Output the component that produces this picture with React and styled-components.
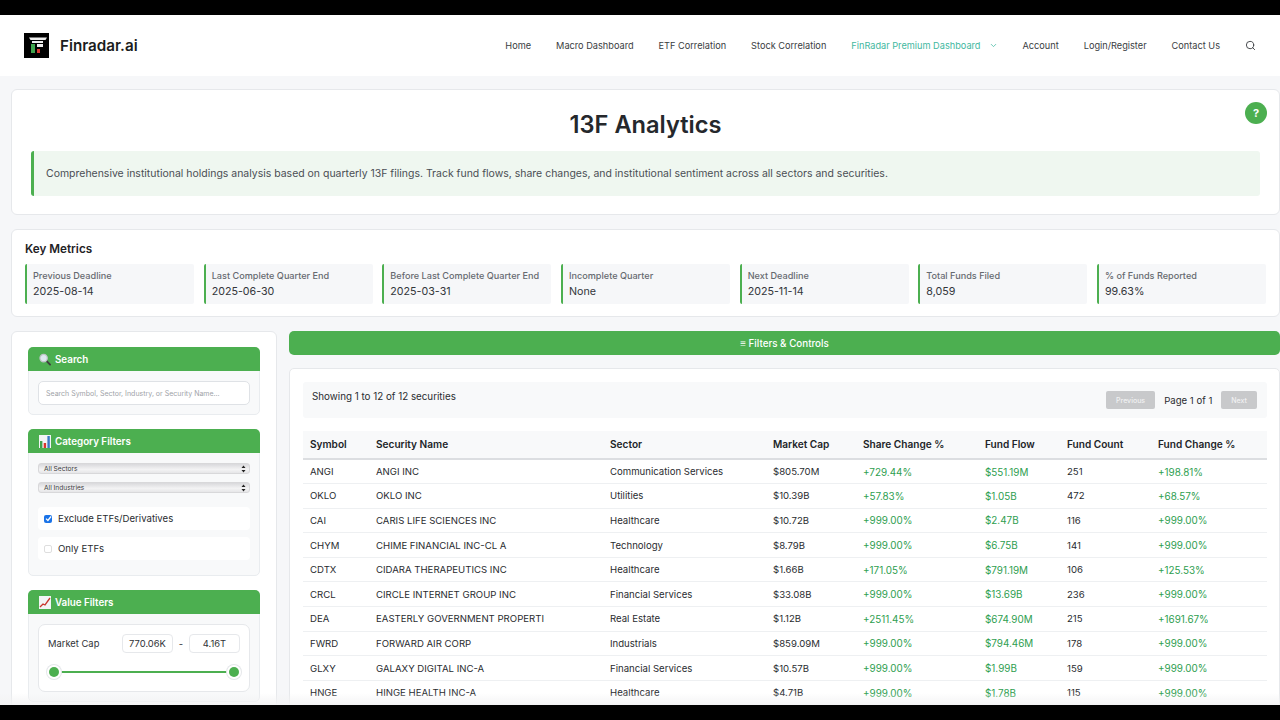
import React from "react";
import styled, { createGlobalStyle } from "styled-components";
import { Search as SearchIcon, ChevronDown } from "lucide-react";

const Global = createGlobalStyle`
  html, body { margin: 0; padding: 0; background: #000; }
  body { font-family: Inter, "Liberation Sans", sans-serif; color: #212529; }
  * { box-sizing: border-box; }
`;

const Screen = styled.div`
  position: relative;
  width: 1280px;
  height: 720px;
  padding: 15px 0;
  background: #000;
  overflow: hidden;
`;
const Page = styled.div`
  height: 690px;
  background: #f6f7f9;
  overflow: hidden;
`;
const Fade = styled.div`
  position: absolute;
  left: 0;
  right: 0;
  bottom: 15px;
  height: 12px;
  background: linear-gradient(to bottom, rgba(255,255,255,0), rgba(243,243,244,0.95));
`;
const Header = styled.header`
  height: 61px;
  background: #fff;
  display: flex;
  align-items: center;
  justify-content: space-between;
  padding: 0 24px;
`;
const Brand = styled.div`
  display: flex;
  align-items: center;
  gap: 11px;
  font-size: 15.2px;
  font-weight: 600;
  color: #1b1d20;
`;
const Nav = styled.nav`
  display: flex;
  align-items: center;
  gap: 25px;
  font-size: 9.2px;
  color: #3a3d42;
`;
const NavLink = styled.span`
  display: flex;
  align-items: center;
  gap: 8px;
  color: ${p => (p.$active ? "#3fb8a0" : "#3a3d42")};
`;
const Content = styled.main`
  padding: 13px 0 0 11px;
  display: flex;
  flex-direction: column;
  gap: 14px;
`;
const Card = styled.section`
  background: #fff;
  border: 1px solid #e6e8eb;
  border-radius: 6px;
`;
const Hero = styled(Card)`
  position: relative;
  height: 126px;
  padding: 20px 19px 0 19px;
`;
const Title = styled.h1`
  margin: 0 0 11px;
  text-align: center;
  font-size: 23.6px;
  line-height: 30px;
  font-weight: 600;
  color: #25282c;
`;
const Intro = styled.div`
  height: 45px;
  display: flex;
  align-items: center;
  padding-left: 12px;
  background: #eff7f0;
  border-left: 3px solid #4caf50;
  border-radius: 3px;
  font-size: 10.47px;
  color: #4a4e54;
`;
const HelpButton = styled.div`
  position: absolute;
  top: 12px;
  right: 12px;
  width: 22px;
  height: 22px;
  border-radius: 50%;
  background: #4caf50;
  color: #fff;
  font-size: 11px;
  font-weight: 700;
  display: flex;
  align-items: center;
  justify-content: center;
`;
const Metrics = styled(Card)`
  height: 88px;
  padding: 12px 13px 0 13px;
`;
const MetricsTitle = styled.h2`
  margin: 0 0 7px;
  font-size: 11.7px;
  line-height: 15px;
  font-weight: 600;
  color: #1f2226;
`;
const MetricsGrid = styled.div`
  display: grid;
  grid-template-columns: repeat(7, 1fr);
  gap: 9.6px;
`;
const Metric = styled.div`
  height: 40px;
  padding: 6px 0 0 6px;
  background: #f6f7f9;
  border-left: 2px solid #4caf50;
  border-radius: 2px;
`;
const MetricLabel = styled.div`
  font-size: 9.15px;
  line-height: 12px;
  font-weight: 500;
  color: #666a70;
`;
const MetricValue = styled.div`
  margin-top: 3px;
  font-size: 10.7px;
  line-height: 13px;
  color: #33363b;
`;
const Columns = styled.div`
  display: grid;
  grid-template-columns: 266px 1fr;
  gap: 12px;
`;
const Sidebar = styled.aside`
  background: #fff;
  border: 1px solid #e6e8eb;
  border-radius: 6px;
  padding: 15px 16px 0;
  display: flex;
  flex-direction: column;
  gap: 14px;
  height: 420px;
`;
const Section = styled.div`
  background: #f8f9fa;
  border: 1px solid #e9ecef;
  border-radius: 5px;
`;
const SectionHead = styled.div`
  margin: -1px -1px 0;
  height: 24px;
  padding: 0 11px;
  background: #4caf50;
  border-radius: 5px 5px 0 0;
  display: flex;
  align-items: center;
  gap: 4px;
  color: #fff;
  font-size: 9.8px;
  font-weight: 600;
`;
const SectionBody = styled.div`
  padding: 10px 9px ${p => p.$bottom ?? 9}px;
`;
const SearchInput = styled.div`
  height: 24px;
  padding: 0 7px;
  display: flex;
  align-items: center;
  background: #fff;
  border: 1px solid #dfe2e6;
  border-radius: 5px;
  color: #a0a3a8;
  font-size: 7px;
`;
const Select = styled.div`
  height: 11px;
  margin-bottom: 8px;
  padding: 0 3px 0 5px;
  display: flex;
  align-items: center;
  justify-content: space-between;
  background: linear-gradient(to bottom, #d9d9dc, #f3f3f4 60%, #e6e6e8);
  border: 1px solid #d8d8da;
  border-radius: 3px;
  font-size: 6.6px;
  color: #3a3a3c;
`;
const CheckRow = styled.label`
  height: 23px;
  margin-top: ${p => (p.$first ? 14 : 7)}px;
  padding-left: 6px;
  display: flex;
  align-items: center;
  gap: 6px;
  background: #fff;
  border-radius: 4px;
  font-size: 9.6px;
  color: #2a2c30;
`;
const Check = styled.span`
  width: 8px;
  height: 8px;
  border-radius: 2px;
  display: flex;
  align-items: center;
  justify-content: center;
  background: ${p => (p.$on ? "#1a73e8" : "#fff")};
  border: ${p => (p.$on ? "none" : "1px solid #dedede")};
`;
const RangeCard = styled.div`
  height: 68px;
  padding: 9px 9px 0;
  background: #fff;
  border: 1px solid #e6e8eb;
  border-radius: 7px;
`;
const RangeTop = styled.div`
  display: flex;
  align-items: center;
  font-size: 9.4px;
  color: #2f3236;
`;
const RangeLabel = styled.span`
  flex: 1;
`;
const RangeInput = styled.div`
  width: 51px;
  height: 19px;
  display: flex;
  align-items: center;
  justify-content: center;
  background: #fff;
  border: 1px solid #e6e8eb;
  border-radius: 4px;
  font-size: 9.4px;
`;
const Dash = styled.span`
  width: 16px;
  text-align: center;
`;
const Slider = styled.div`
  position: relative;
  height: 2px;
  margin-top: 18px;
  background: #4caf50;
`;
const Thumb = styled.span`
  position: absolute;
  top: -4px;
  ${p => (p.$right ? "right: 1px;" : "left: 1px;")}
  width: 10px;
  height: 10px;
  border-radius: 50%;
  background: #4caf50;
  box-shadow: 0 0 0 2px #fff, 0 0 0 3px #e5e7ea;
`;
const Main = styled.div`
  display: flex;
  flex-direction: column;
  gap: 13px;
`;
const FilterBar = styled.div`
  height: 24px;
  display: flex;
  align-items: center;
  justify-content: center;
  background: #4caf50;
  border-radius: 5px;
  color: #fff;
  font-size: 9.8px;
  font-weight: 500;
`;
const TableCard = styled.div`
  height: 400px;
  padding: 13px 12px 0 13px;
  background: #fff;
  border: 1px solid #e6e8eb;
  border-radius: 5px;
`;
const InfoBar = styled.div`
  height: 36px;
  margin-bottom: 13px;
  padding: 0 10px 0 9px;
  display: flex;
  align-items: center;
  justify-content: space-between;
  background: #f8f9fa;
  border-radius: 3px;
`;
const InfoText = styled.span`
  font-size: 9.8px;
  color: #2a2c30;
  margin-top: -7px;
`;
const Pager = styled.div`
  display: flex;
  align-items: center;
  gap: 9px;
  font-size: 9.6px;
  color: #2a2c30;
`;
const PageButton = styled.div`
  height: 18px;
  padding: 0 10px;
  display: flex;
  align-items: center;
  background: #c8c9cb;
  border-radius: 2px;
  color: #f1f1f2;
  font-size: 7px;
  font-weight: 500;
`;
const Table = styled.table`
  width: 964px;
  border-collapse: collapse;
  table-layout: fixed;
  font-size: 9.6px;
  color: #2a2c30;
`;
const Th = styled.th`
  height: 28px;
  padding: 0 7px 2px;
  text-align: left;
  font-size: 10.1px;
  font-weight: 600;
  background: #f8f9fa;
  border-bottom: 2px solid #dcdee1;
  color: #212428;
`;
const Td = styled.td`
  height: 24.6px;
  padding: 0 7px;
  white-space: nowrap;
  overflow: hidden;
  border-bottom: 1px solid #eef0f2;
  font-size: ${p => (p.$up ? 9.9 : 9.6)}px;
  color: ${p => (p.$up ? "#2e9e4f" : "#2a2c30")};
`;

const Logo = () => (
  <svg width="25" height="25" viewBox="0 0 25 25">
    <rect width="25" height="25" fill="#000" />
    <path d="M5 4.5 H23 L21.5 7 H6.5 Z" fill="#eee" />
    <rect x="8" y="8" width="11" height="2" fill="#eee" />
    <rect x="7" y="11" width="4" height="9" fill="#3fa34d" />
    <rect x="13" y="11" width="6" height="3" fill="#eee" />
    <rect x="13" y="16" width="3" height="4" fill="#d93a32" />
  </svg>
);
const MagnifierEmoji = () => (
  <svg width="12" height="13" viewBox="0 0 13 13">
    <line x1="7.8" y1="7.8" x2="12" y2="12" stroke="#3f3f3f" strokeWidth="2" strokeLinecap="round" />
    <circle cx="5" cy="5" r="4" fill="#dde9ef" stroke="#bfc3c8" strokeWidth="1.3" />
  </svg>
);
const BarsEmoji = () => (
  <svg width="12" height="13" viewBox="0 0 12 13">
    <rect width="12" height="13" fill="#f2f4f5" />
    <rect x="1" y="6" width="2.4" height="7" fill="#3fa34d" />
    <rect x="4.7" y="8" width="2.4" height="5" fill="#d9352c" />
    <rect x="8.4" y="1" width="2.4" height="12" fill="#3b78c4" />
  </svg>
);
const ChartEmoji = () => (
  <svg width="12" height="13" viewBox="0 0 12 13">
    <rect width="12" height="13" fill="#f2f4f5" />
    <path d="M1 11 L4 8 L6 9 L11 2" fill="none" stroke="#c9352c" strokeWidth="1.3" />
  </svg>
);
const Tick = () => (
  <svg width="7" height="7" viewBox="0 0 7 7">
    <path d="M1 3.6 L2.9 5.5 L6 1.5" fill="none" stroke="#fff" strokeWidth="1.3" />
  </svg>
);
const UpDown = () => (
  <svg width="5" height="8" viewBox="0 0 5 8">
    <path d="M2.5 0.5 L4.5 3 H0.5 Z M2.5 7.5 L0.5 5 H4.5 Z" fill="#222" />
  </svg>
);

const navItems = ["Home", "Macro Dashboard", "ETF Correlation", "Stock Correlation"];
const navAfter = ["Account", "Login/Register", "Contact Us"];
const metrics = [
  ["Previous Deadline", "2025-08-14"],
  ["Last Complete Quarter End", "2025-06-30"],
  ["Before Last Complete Quarter End", "2025-03-31"],
  ["Incomplete Quarter", "None"],
  ["Next Deadline", "2025-11-14"],
  ["Total Funds Filed", "8,059"],
  ["% of Funds Reported", "99.63%"],
];
const columns = [
  ["Symbol", 66], ["Security Name", 234], ["Sector", 163], ["Market Cap", 90],
  ["Share Change %", 122], ["Fund Flow", 82], ["Fund Count", 91], ["Fund Change %", 116],
];
const rows = [
  ["ANGI", "ANGI INC", "Communication Services", "$805.70M", "+729.44%", "$551.19M", "251", "+198.81%"],
  ["OKLO", "OKLO INC", "Utilities", "$10.39B", "+57.83%", "$1.05B", "472", "+68.57%"],
  ["CAI", "CARIS LIFE SCIENCES INC", "Healthcare", "$10.72B", "+999.00%", "$2.47B", "116", "+999.00%"],
  ["CHYM", "CHIME FINANCIAL INC-CL A", "Technology", "$8.79B", "+999.00%", "$6.75B", "141", "+999.00%"],
  ["CDTX", "CIDARA THERAPEUTICS INC", "Healthcare", "$1.66B", "+171.05%", "$791.19M", "106", "+125.53%"],
  ["CRCL", "CIRCLE INTERNET GROUP INC", "Financial Services", "$33.08B", "+999.00%", "$13.69B", "236", "+999.00%"],
  ["DEA", "EASTERLY GOVERNMENT PROPERTI", "Real Estate", "$1.12B", "+2511.45%", "$674.90M", "215", "+1691.67%"],
  ["FWRD", "FORWARD AIR CORP", "Industrials", "$859.09M", "+999.00%", "$794.46M", "178", "+999.00%"],
  ["GLXY", "GALAXY DIGITAL INC-A", "Financial Services", "$10.57B", "+999.00%", "$1.99B", "159", "+999.00%"],
  ["HNGE", "HINGE HEALTH INC-A", "Healthcare", "$4.71B", "+999.00%", "$1.78B", "115", "+999.00%"],
];
const greenCols = new Set([4, 5, 7]);

export default function App() {
  return (
    <>
      <Global />
      <Screen>
        <Page>
          <Header>
            <Brand><Logo />Finradar.ai</Brand>
            <Nav>
              {navItems.map(n => <NavLink key={n}>{n}</NavLink>)}
              <NavLink $active>FinRadar Premium Dashboard <ChevronDown size={9} /></NavLink>
              {navAfter.map(n => <NavLink key={n}>{n}</NavLink>)}
              <SearchIcon size={11} color="#3a3d42" />
            </Nav>
          </Header>
          <Content>
            <Hero>
              <HelpButton>?</HelpButton>
              <Title>13F Analytics</Title>
              <Intro>Comprehensive institutional holdings analysis based on quarterly 13F filings. Track fund flows, share changes, and institutional sentiment across all sectors and securities.</Intro>
            </Hero>
            <Metrics>
              <MetricsTitle>Key Metrics</MetricsTitle>
              <MetricsGrid>
                {metrics.map(([l, v]) => (
                  <Metric key={l}>
                    <MetricLabel>{l}</MetricLabel>
                    <MetricValue>{v}</MetricValue>
                  </Metric>
                ))}
              </MetricsGrid>
            </Metrics>
            <Columns>
              <Sidebar>
                <Section>
                  <SectionHead><MagnifierEmoji />Search</SectionHead>
                  <SectionBody>
                    <SearchInput>Search Symbol, Sector, Industry, or Security Name...</SearchInput>
                  </SectionBody>
                </Section>
                <Section>
                  <SectionHead><BarsEmoji />Category Filters</SectionHead>
                  <SectionBody $bottom={15}>
                    <Select>All Sectors<UpDown /></Select>
                    <Select>All Industries<UpDown /></Select>
                    <CheckRow $first><Check $on><Tick /></Check>Exclude ETFs/Derivatives</CheckRow>
                    <CheckRow><Check />Only ETFs</CheckRow>
                  </SectionBody>
                </Section>
                <Section>
                  <SectionHead><ChartEmoji />Value Filters</SectionHead>
                  <SectionBody>
                    <RangeCard>
                      <RangeTop>
                        <RangeLabel>Market Cap</RangeLabel>
                        <RangeInput>770.06K</RangeInput>
                        <Dash>-</Dash>
                        <RangeInput>4.16T</RangeInput>
                      </RangeTop>
                      <Slider><Thumb /><Thumb $right /></Slider>
                    </RangeCard>
                  </SectionBody>
                </Section>
              </Sidebar>
              <Main>
                <FilterBar>≡ Filters &amp; Controls</FilterBar>
                <TableCard>
                  <InfoBar>
                    <InfoText>Showing 1 to 12 of 12 securities</InfoText>
                    <Pager>
                      <PageButton>Previous</PageButton>
                      Page 1 of 1
                      <PageButton>Next</PageButton>
                    </Pager>
                  </InfoBar>
                  <Table>
                    <colgroup>
                      {columns.map(([n, w]) => <col key={n} style={{ width: w }} />)}
                    </colgroup>
                    <thead>
                      <tr>{columns.map(([n]) => <Th key={n}>{n}</Th>)}</tr>
                    </thead>
                    <tbody>
                      {rows.map(r => (
                        <tr key={r[0]}>
                          {r.map((c, i) => <Td key={i} $up={greenCols.has(i)}>{c}</Td>)}
                        </tr>
                      ))}
                    </tbody>
                  </Table>
                </TableCard>
              </Main>
            </Columns>
          </Content>
        </Page>
        <Fade />
      </Screen>
    </>
  );
}
